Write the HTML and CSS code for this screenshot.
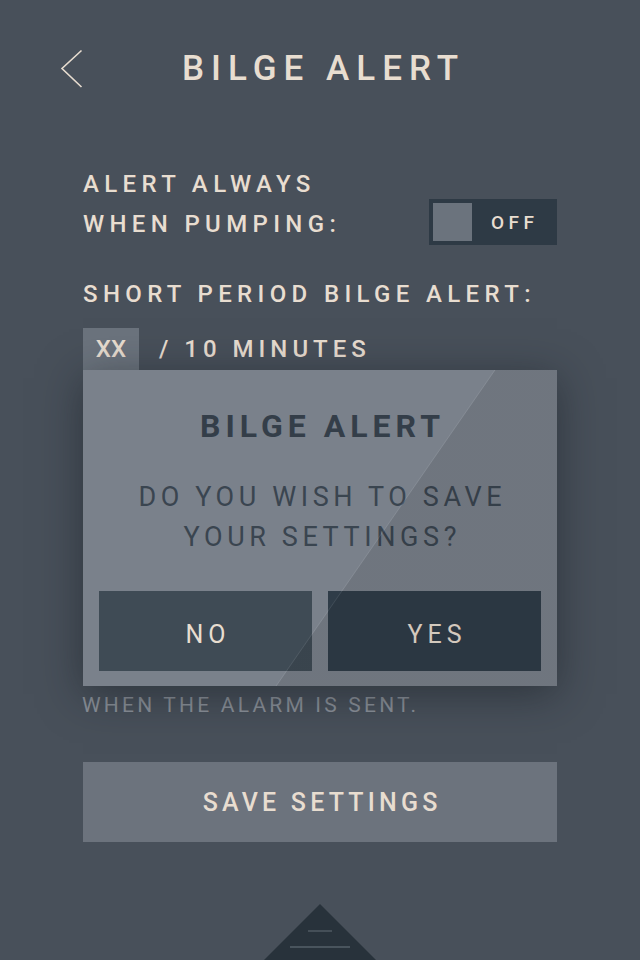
FILE: index.html
```html
<!DOCTYPE html>
<html lang="en">
<head>
<meta charset="utf-8">
<title>Bilge Alert</title>
<link rel="stylesheet" href="styles.css">
</head>
<body>
<div class="screen">
  <header class="header">
    <div class="back">
      <svg width="24" height="40" viewBox="0 0 24 40"><polyline points="21.5,1.5 2,19.5 21.5,38" fill="none" stroke="#e8ddd0" stroke-width="1.6"/></svg>
    </div>
    <h1 class="title">BILGE ALERT</h1>
    <div></div>
  </header>

  <main class="content">
    <div class="row-toggle">
      <div class="label">ALERT ALWAYS<br>WHEN PUMPING:</div>
      <div class="toggle">
        <span class="knob"></span>
        <span class="toggle-text">OFF</span>
      </div>
    </div>

    <div class="label short">SHORT PERIOD BILGE ALERT:</div>

    <div class="row-minutes">
      <span class="field">XX</span>
      <span class="label minutes">/ 10 MINUTES</span>
    </div>

    <p class="hint">WHEN THE ALARM IS SENT.</p>

    <button class="save">SAVE SETTINGS</button>

    <div class="tab">
      <svg width="116" height="58" viewBox="0 0 116 58">
        <polygon points="58,0 116,58 0,58" fill="#28323b"/>
        <line x1="46" y1="27" x2="70" y2="27" stroke="#55606a" stroke-width="1.3"/>
        <line x1="28" y1="43" x2="88" y2="43" stroke="#55606a" stroke-width="1.3"/>
      </svg>
    </div>
  </main>

  <div class="dialog">
    <h2 class="dialog-title">BILGE ALERT</h2>
    <p class="dialog-text">DO YOU WISH TO SAVE<br>YOUR SETTINGS?</p>
    <div class="dialog-buttons">
      <button class="btn btn-no">NO</button>
      <button class="btn btn-yes">YES</button>
    </div>
  </div>
</div>
</body>
</html>
```

FILE: styles.css
```css
* { box-sizing: border-box; }

html, body {
  margin: 0;
  padding: 0;
}

body {
  background: #48505a;
  font-family: Roboto, "Liberation Sans", sans-serif;
  color: #e8ddd0;
  width: 640px;
  height: 960px;
  overflow: hidden;
}

.screen {
  position: relative;
  width: 640px;
  height: 960px;
}

.header {
  display: grid;
  grid-template-columns: 1fr auto 1fr;
  align-items: center;
  height: 138px;
}

.back {
  padding-left: 60px;
  display: flex;
  align-items: center;
}

.back svg { display: block; }

.title {
  margin: 0;
  font-size: 35px;
  font-weight: 500;
  letter-spacing: 0.2em;
  padding-left: 0.2em;
  line-height: 40px;
}

.content {
  padding: 26px 83px 0;
}

.label {
  font-size: 24px;
  font-weight: 500;
  letter-spacing: 5.35px;
  line-height: 40px;
}

.minutes {
  letter-spacing: 5px;
}

.row-toggle {
  display: flex;
  justify-content: space-between;
  align-items: flex-end;
}

.toggle {
  width: 128px;
  height: 46px;
  background: #2e3a45;
  padding: 4px;
  display: flex;
  align-items: center;
  margin-bottom: -1px;
}

.knob {
  width: 39px;
  height: 38px;
  background: #6b737d;
}

.toggle-text {
  flex: 1;
  text-align: center;
  font-size: 19px;
  font-weight: 500;
  letter-spacing: 4.4px;
  padding-left: 4.4px;
}

.short {
  margin-top: 30px;
}

.row-minutes {
  display: flex;
  align-items: center;
  gap: 20px;
  margin-top: 14px;
  height: 42px;
}

.field {
  width: 56px;
  height: 42px;
  background: #6b737d;
  display: flex;
  align-items: center;
  justify-content: center;
  font-size: 24px;
  font-weight: 500;
}

.hint {
  margin: 320px 0 0 -1px;
  font-size: 21px;
  line-height: 30px;
  letter-spacing: 3.2px;
  color: #8b9199;
}

.save {
  display: block;
  width: 100%;
  height: 80px;
  margin-top: 42px;
  border: 0;
  background: #6c737d;
  color: #e8ddd0;
  font-family: inherit;
  font-size: 25px;
  font-weight: 500;
  letter-spacing: 4.2px;
  padding: 0 0 0 4.2px;
}

.tab {
  display: flex;
  justify-content: center;
  margin-top: 62px;
}

.tab svg { display: block; }

/* Modal dialog overlaying the settings */
.dialog {
  position: absolute;
  top: 370px;
  left: 83px;
  width: 474px;
  height: 316px;
  background: #7a818b;
  box-shadow: 0 8px 40px rgba(20, 25, 32, 0.5);
  padding: 36px 16px 15px;
  text-align: center;
}

.dialog::after {
  content: "";
  position: absolute;
  inset: 0;
  pointer-events: none;
  background: linear-gradient(124.7deg, transparent 59.3%, rgba(255,255,255,0.08) 59.45%, rgba(0,0,0,0.09) 59.6%);
}

.dialog-title {
  margin: 0;
  font-size: 32px;
  font-weight: 700;
  line-height: 40px;
  letter-spacing: 5px;
  padding-left: 5px;
  color: #343e49;
}

.dialog-text {
  margin: 31px 0 0;
  font-size: 27px;
  font-weight: 400;
  line-height: 40px;
  letter-spacing: 4.6px;
  padding-left: 4.6px;
  color: #3a4550;
}

.dialog-buttons {
  display: grid;
  grid-template-columns: 1fr 1fr;
  gap: 16px;
  margin-top: 34px;
}

.btn {
  height: 80px;
  border: 0;
  color: #e8ddd0;
  font-family: inherit;
  font-size: 25px;
  font-weight: 400;
  letter-spacing: 0.2em;
  padding: 6px 0 0 0.2em;
}

.btn-no { background: #3f4b55; }
.btn-yes { background: #2f3c48; }
```
